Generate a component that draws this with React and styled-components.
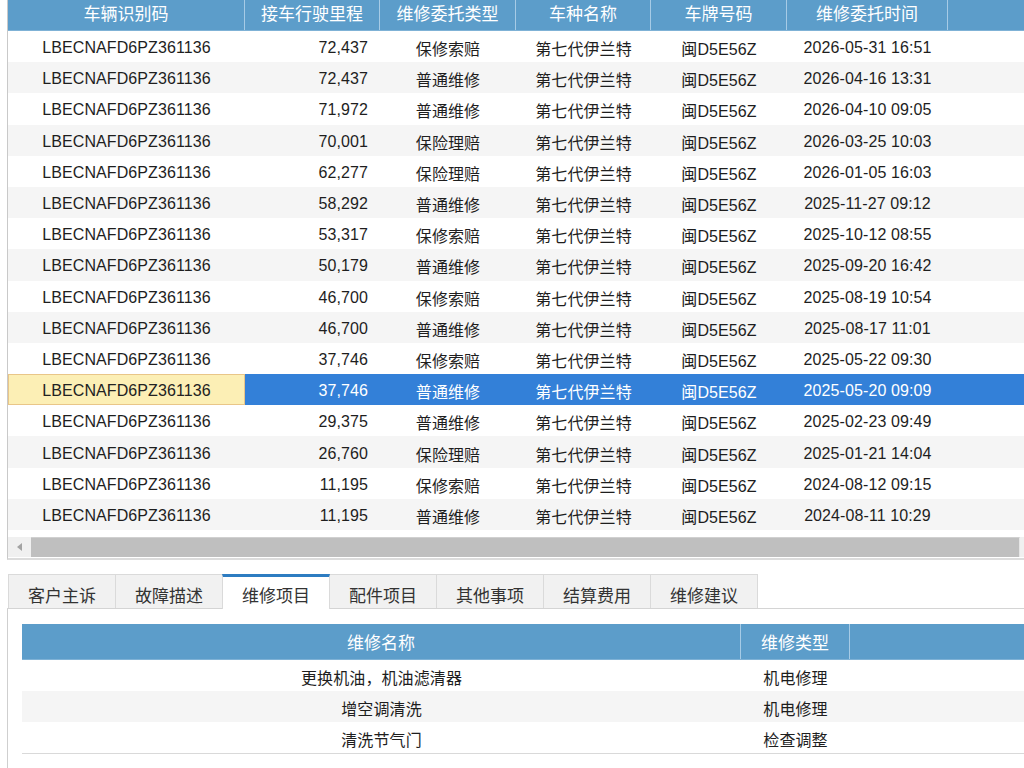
import React from "react";
import styled, { createGlobalStyle, css } from "styled-components";

const GlobalStyle = createGlobalStyle`
  html, body { margin: 0; padding: 0; background: #fff; }
  body {
    font-family: "Liberation Sans", Arial, "Noto Sans CJK SC", sans-serif;
    color: #222;
    overflow: hidden;
  }
`;

const FONT = `"Liberation Sans", Arial, "Noto Sans CJK SC", sans-serif`;
const HEADER_BLUE = "#5c9dca";

const Page = styled.div`
  width: 1024px;
  height: 768px;
  padding-left: 7px;
  box-sizing: border-box;
  overflow: hidden;
`;

const GridPanel = styled.div`
  border-left: 1px solid #c9c9c9;
  border-bottom: 2px solid #dcdcdc;
  display: flex;
  flex-direction: column;
`;

const topCols = "237px 135px 136px 135px 136px 161px 1fr";

const HeaderRow = styled.div`
  display: grid;
  grid-template-columns: ${(p) => p.$cols};
  height: ${(p) => p.$h}px;
  background: ${HEADER_BLUE};
  border-bottom: 1px solid #7fb2d6;
  box-sizing: border-box;
`;

const HeaderCell = styled.div`
  display: flex;
  align-items: center;
  justify-content: center;
  padding-bottom: ${(p) => p.$pb || 0}px;
  color: #fff;
  font-size: 17px;
  font-family: ${FONT};
  border-right: 1px solid #a6cbe6;
  box-sizing: border-box;
  &:last-child { border-right: none; }
`;

const Row = styled.div`
  display: grid;
  grid-template-columns: ${(p) => p.$cols};
  height: ${(p) => p.$h}px;
  background: ${(p) => (p.$selected ? "#3380d8" : p.$alt ? "#f5f5f5" : "#fff")};
  color: ${(p) => (p.$selected ? "#fff" : "#1e1e1e")};
`;

const Cell = styled.div`
  display: flex;
  align-items: center;
  justify-content: ${(p) => p.$align || "center"};
  padding: ${(p) => (p.$align === "flex-end" ? "0 12px 0 0" : "0")};
  padding-top: 3px;
  font-size: 16px;
  font-family: ${FONT};
  letter-spacing: 0.1px;
  white-space: nowrap;
  box-sizing: border-box;
  ${(p) =>
    p.$focus &&
    css`
      background: #fcefb5;
      border: 1px solid #e9c688;
      color: #222;
    `}
`;

const Gap = styled.div`
  height: 7px;
  background: #fff;
`;

const Scrollbar = styled.div`
  display: flex;
  height: 20px;
  background: #f0f0f0;
  border-bottom: 1px solid #fff;
`;

const ArrowButton = styled.div`
  width: 23px;
  display: flex;
  align-items: center;
  justify-content: center;
  &::before {
    content: "";
    width: 0;
    height: 0;
    border-top: 4px solid transparent;
    border-bottom: 4px solid transparent;
    border-right: 5px solid #a3a3a3;
  }
`;

const Thumb = styled.div`
  flex: 1;
  background: #bfbfbf;
  border-top: 1px solid #d0d0d0;
  border-right: 1px solid #e6e6e6;
  margin-right: 4px;
`;

const TabStrip = styled.div`
  display: flex;
  margin-top: 14px;
  padding-left: 1px;
  border-bottom: 1px solid #d4d4d4;
`;

const Tab = styled.div`
  width: 108px;
  height: 34px;
  box-sizing: border-box;
  display: flex;
  align-items: center;
  justify-content: center;
  font-size: 17px;
  font-family: ${FONT};
  color: #333;
  padding-top: 5px;
  border: 1px solid #dadada;
  border-bottom: none;
  margin-right: -1px;
  background: ${(p) => (p.$active ? "#fff" : "#f1f1f1")};
  ${(p) =>
    p.$active &&
    css`
      border-top: 3px solid #2d7cc1;
      margin-bottom: -1px;
      height: 35px;
      padding-top: 3px;
      position: relative;
      z-index: 1;
    `}
`;

const ContentPanel = styled.div`
  border-left: 1px solid #cfcfcf;
  padding: 15px 0 0 14px;
  height: 200px;
`;

const SubTable = styled.div`
  display: flex;
  flex-direction: column;
  border-bottom: 1px solid #d9d9d9;
`;

const subCols = "719px 109px 1fr";

const records = [
  ["72,437", "保修索赔", "2026-05-31 16:51"],
  ["72,437", "普通维修", "2026-04-16 13:31"],
  ["71,972", "普通维修", "2026-04-10 09:05"],
  ["70,001", "保险理赔", "2026-03-25 10:03"],
  ["62,277", "保险理赔", "2026-01-05 16:03"],
  ["58,292", "普通维修", "2025-11-27 09:12"],
  ["53,317", "保修索赔", "2025-10-12 08:55"],
  ["50,179", "普通维修", "2025-09-20 16:42"],
  ["46,700", "保修索赔", "2025-08-19 10:54"],
  ["46,700", "普通维修", "2025-08-17 11:01"],
  ["37,746", "保修索赔", "2025-05-22 09:30"],
  ["37,746", "普通维修", "2025-05-20 09:09"],
  ["29,375", "普通维修", "2025-02-23 09:49"],
  ["26,760", "保险理赔", "2025-01-21 14:04"],
  ["11,195", "保修索赔", "2024-08-12 09:15"],
  ["11,195", "普通维修", "2024-08-11 10:29"],
];

const headers = ["车辆识别码", "接车行驶里程", "维修委托类型", "车种名称", "车牌号码", "维修委托时间", ""];

const tabs = ["客户主诉", "故障描述", "维修项目", "配件项目", "其他事项", "结算费用", "维修建议"];

const items = [
  ["更换机油，机油滤清器", "机电修理"],
  ["增空调清洗", "机电修理"],
  ["清洗节气门", "检查调整"],
];

const SELECTED = 11;

export default function App() {
  return (
    <Page>
      <GlobalStyle />
      <GridPanel>
        <HeaderRow $cols={topCols} $h={31}>
          {headers.map((h, i) => (
            <HeaderCell key={i} $pb={5}>{h}</HeaderCell>
          ))}
        </HeaderRow>
        {records.map((r, i) => (
          <Row key={i} $cols={topCols} $h={31.2} $alt={i % 2 === 1} $selected={i === SELECTED}>
            <Cell $focus={i === SELECTED}>LBECNAFD6PZ361136</Cell>
            <Cell $align="flex-end">{r[0]}</Cell>
            <Cell>{r[1]}</Cell>
            <Cell>第七代伊兰特</Cell>
            <Cell>闽D5E56Z</Cell>
            <Cell>{r[2]}</Cell>
            <Cell />
          </Row>
        ))}
        <Gap />
        <Scrollbar>
          <ArrowButton />
          <Thumb />
        </Scrollbar>
      </GridPanel>
      <TabStrip>
        {tabs.map((t) => (
          <Tab key={t} $active={t === "维修项目"}>{t}</Tab>
        ))}
      </TabStrip>
      <ContentPanel>
        <SubTable>
          <HeaderRow $cols={subCols} $h={36}>
            <HeaderCell>维修名称</HeaderCell>
            <HeaderCell>维修类型</HeaderCell>
            <HeaderCell />
          </HeaderRow>
          {items.map((it, i) => (
            <Row key={i} $cols={subCols} $h={31} $alt={i % 2 === 1}>
              <Cell>{it[0]}</Cell>
              <Cell>{it[1]}</Cell>
              <Cell />
            </Row>
          ))}
        </SubTable>
      </ContentPanel>
    </Page>
  );
}
